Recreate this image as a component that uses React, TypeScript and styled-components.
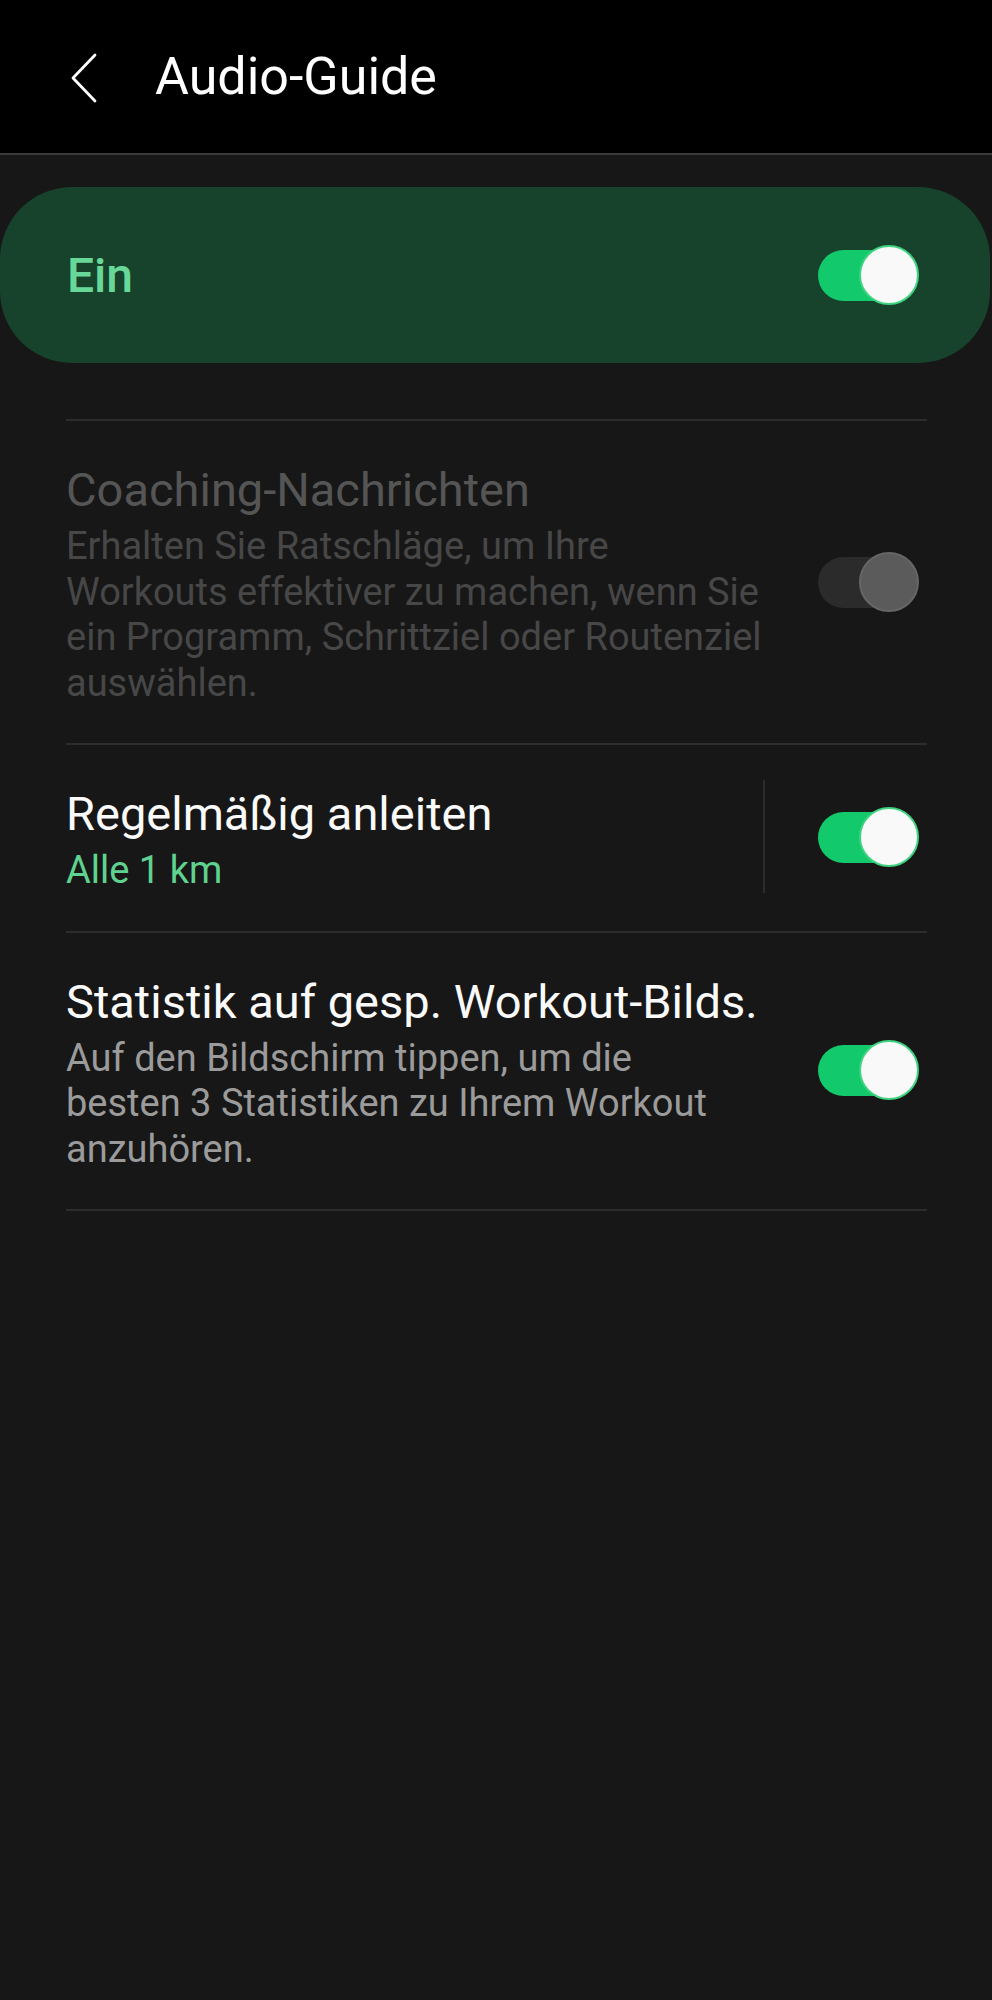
import React, { useState } from 'react';
import styled, { createGlobalStyle } from 'styled-components';

const GlobalStyle = createGlobalStyle`
  html, body {
    margin: 0;
    padding: 0;
    background: #171717;
  }
  body {
    font-family: Roboto, 'Noto Sans', 'Liberation Sans', sans-serif;
  }
`;

interface settingItem {
  key: string;
  title: string;
  sub?: string;
  desc?: string[];
  on: boolean;
  disabled?: boolean;
}

// lines are split as on the device, the font there is narrower than ours
const items: settingItem[] = [
  {
    key: 'coaching',
    title: 'Coaching-Nachrichten',
    desc: [
      'Erhalten Sie Ratschläge, um Ihre',
      'Workouts effektiver zu machen, wenn Sie',
      'ein Programm, Schrittziel oder Routenziel',
      'auswählen.',
    ],
    on: false,
    disabled: true,
  },
  {
    key: 'regular',
    title: 'Regelmäßig anleiten',
    sub: 'Alle 1 km',
    on: true,
  },
  {
    key: 'stats',
    title: 'Statistik auf gesp. Workout-Bilds.',
    desc: [
      'Auf den Bildschirm tippen, um die',
      'besten 3 Statistiken zu Ihrem Workout',
      'anzuhören.',
    ],
    on: true,
  },
];

const Toggle = ({ on, disabled, inList }: { on: boolean; disabled?: boolean; inList?: boolean }) => (
  <Switch $inList={inList}>
    <Track $on={on} $disabled={disabled} />
    <Thumb $on={on} $disabled={disabled} />
  </Switch>
);

const App = () => {
  const [masterOn, setMasterOn] = useState(true);
  return (
    <Page>
      <GlobalStyle />
      <Header>
        <BackBtn aria-label="Zurück">
          <svg width="28" height="50" viewBox="0 0 28 50" fill="none">
            <path d="M25 2 L3 25 L25 48" stroke="#fff" strokeWidth="2.8" strokeLinecap="round" strokeLinejoin="round" />
          </svg>
        </BackBtn>
        <Title>Audio-Guide</Title>
      </Header>
      <Content>
        <MasterCard onClick={() => setMasterOn(!masterOn)}>
          <MasterLabel>Ein</MasterLabel>
          <Toggle on={masterOn} />
        </MasterCard>
        <List>
          {items.map((item) => (
            <Row key={item.key}>
              <TextCol>
                <RowTitle $disabled={item.disabled}>{item.title}</RowTitle>
                {item.sub && <SubValue>{item.sub}</SubValue>}
                {item.desc && (
                  <Desc $disabled={item.disabled}>
                    {item.desc.map((line, i) => (
                      <DescLine key={i}>{line}</DescLine>
                    ))}
                  </Desc>
                )}
              </TextCol>
              {item.sub && <VDivider />}
              <Toggle on={item.on} disabled={item.disabled} inList />
            </Row>
          ))}
        </List>
      </Content>
    </Page>
  );
};

const Page = styled.div`
  min-height: 2000px;
  background: #171717;
`;

const Header = styled.div`
  display: flex;
  align-items: center;
  height: 155px;
  background: #000;
  border-bottom: 2px solid #3a3a3a;
  box-sizing: border-box;
  padding-left: 70px;
`;

const BackBtn = styled.button`
  display: flex;
  align-items: center;
  background: none;
  border: none;
  padding: 0;
  margin-right: 57px;
  margin-top: 2px;
`;

const Title = styled.h1`
  margin: 0;
  color: #fff;
  font-size: 52px;
  font-weight: 400;
  line-height: 60px;
`;

const Content = styled.div`
  padding-top: 32px;
`;

const MasterCard = styled.div`
  display: flex;
  align-items: center;
  justify-content: space-between;
  height: 176px;
  margin: 0 2px 0 0;
  padding: 0 72px 0 67px;
  background: #17432d;
  border-radius: 72px;
  cursor: pointer;
`;

const MasterLabel = styled.span`
  color: #68d898;
  font-size: 48px;
  font-weight: 500;
`;

const List = styled.div`
  margin: 56px 65px 0 66px;
  border-top: 2px solid #2c2c2c;
`;

const Row = styled.div`
  display: flex;
  align-items: center;
  padding: 43px 9px 37px 0;
  border-bottom: 2px solid #2c2c2c;
`;

const TextCol = styled.div`
  flex: 1;
  display: flex;
  flex-direction: column;
  gap: 8px;
  min-width: 0;
`;

const RowTitle = styled.div<{ $disabled?: boolean }>`
  color: ${(p) => (p.$disabled ? '#555555' : '#fafafa')};
  font-size: 47px;
  line-height: 52px;
  white-space: nowrap;
`;

const SubValue = styled.div`
  color: #5fd28f;
  font-size: 38px;
  line-height: 45.5px;
`;

const Desc = styled.div<{ $disabled?: boolean }>`
  color: ${(p) => (p.$disabled ? '#474747' : '#9b9b9b')};
  font-size: 38px;
  line-height: 45.5px;
`;

const DescLine = styled.div`
  white-space: nowrap;
`;

const VDivider = styled.div`
  align-self: stretch;
  width: 2px;
  margin: -8px 0 1px auto;
  background: #2c2c2c;
`;

const Switch = styled.div<{ $inList?: boolean }>`
  position: relative;
  flex: 0 0 100px;
  width: 100px;
  height: 60px;
  margin-left: 24px;
  margin-bottom: ${(p) => (p.$inList ? '7px' : '0')};
  ${VDivider} + & {
    margin-left: 53px;
  }
`;

const Track = styled.div<{ $on: boolean; $disabled?: boolean }>`
  position: absolute;
  left: 0;
  top: 5px;
  width: 86px;
  height: 51px;
  border-radius: 26px;
  background: ${(p) => (p.$disabled ? '#2b2b2b' : p.$on ? '#12c96c' : '#3a3a3a')};
`;

const Thumb = styled.div<{ $on: boolean; $disabled?: boolean }>`
  position: absolute;
  top: 0;
  left: ${(p) => (p.$on || p.$disabled ? '41px' : '0')};
  width: 56px;
  height: 56px;
  border-radius: 50%;
  background: ${(p) => (p.$disabled ? '#5b5b5b' : '#f9f9f9')};
  border: 2px solid ${(p) => (p.$disabled ? '#666666' : '#3fd380')};
`;

export default App;
